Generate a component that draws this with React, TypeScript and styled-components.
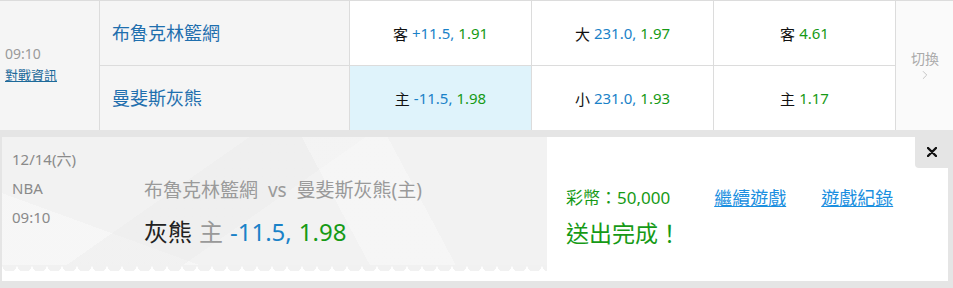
import styled, { createGlobalStyle } from "styled-components"
import { ChevronRight } from "lucide-react"

const GlobalStyle = createGlobalStyle`
  body {
    margin: 0;
    background: #ffffff;
    font-family: "Noto Sans", "Noto Sans CJK TC", sans-serif;
  }
`

const BLUE = "#1a82c8"
const GREEN = "#169a16"

type Odd = { side: string; line?: string; price: string; picked?: boolean }

const rows: { team: string; odds: Odd[] }[] = [
    {
        team: "布魯克林籃網",
        odds: [
            { side: "客", line: "+11.5,", price: "1.91" },
            { side: "大", line: "231.0,", price: "1.97" },
            { side: "客", price: "4.61" },
        ],
    },
    {
        team: "曼斐斯灰熊",
        odds: [
            { side: "主", line: "-11.5,", price: "1.98", picked: true },
            { side: "小", line: "231.0,", price: "1.93" },
            { side: "主", price: "1.17" },
        ],
    },
]

export default function App() {
    return (
        <>
            <GlobalStyle />
            <Board>
                <TimeCell>
                    <Clock>09:10</Clock>
                    <InfoLink href="#">對戰資訊</InfoLink>
                </TimeCell>
                {rows.map((r, i) => (
                    <Row key={r.team} $row={i + 1}>
                        <TeamCell>{r.team}</TeamCell>
                        {r.odds.map((o, j) => (
                            <OddCell key={j} $picked={o.picked}>
                                <Side>{o.side}</Side>
                                {o.line && <Line>{o.line}</Line>}
                                <Price>{o.price}</Price>
                            </OddCell>
                        ))}
                    </Row>
                ))}
                <SwitchCell>
                    <span>切換</span>
                    <ChevronRight size={14} strokeWidth={1.5} color="#bdbdbd" />
                </SwitchCell>
            </Board>

            <SlipArea>
                <Slip>
                    <Ticket>
                        <Meta>
                            <span>12/14(六)</span>
                            <span>NBA</span>
                            <span>09:10</span>
                        </Meta>
                        <Bet>
                            <Matchup>布魯克林籃網&nbsp; vs &nbsp;曼斐斯灰熊(主)</Matchup>
                            <Pick>
                                <PickTeam>灰熊</PickTeam>
                                <PickSide>主</PickSide>
                                <Line>-11.5,</Line>
                                <Price>1.98</Price>
                            </Pick>
                        </Bet>
                    </Ticket>
                    <Result>
                        <ResultTop>
                            <Coins>彩幣：50,000</Coins>
                            <ActionLink href="#">繼續遊戲</ActionLink>
                            <ActionLink href="#">遊戲紀錄</ActionLink>
                        </ResultTop>
                        <Done>送出完成！</Done>
                    </Result>
                    <CloseButton aria-label="close">
                        <svg width="10" height="10" viewBox="0 0 10 10">
                            <path d="M1 1 L9 9 M9 1 L1 9" stroke="#111" strokeWidth="2.4" strokeLinecap="round" />
                        </svg>
                    </CloseButton>
                </Slip>
            </SlipArea>
        </>
    )
}

const Board = styled.div`
    display: grid;
    grid-template-columns: 100px 250px 182px 182px 182px 1fr;
    grid-template-rows: 65px 64px;
    border-top: 1px solid #dcdcdc;
    background: #f5f5f5;
`
const TimeCell = styled.div`
    grid-row: 1 / 3;
    grid-column: 1;
    border-right: 1px solid #dcdcdc;
    display: flex;
    flex-direction: column;
    justify-content: center;
    padding: 0 0 4px 5px;
`
const Clock = styled.span`
    color: #9a9a9a;
    font-size: 14px;
    line-height: 22px;
`
const InfoLink = styled.a`
    color: #1d6a9a;
    font-size: 13px;
    line-height: 20px;
    text-decoration: underline;
`
const Row = styled.div<{ $row: number }>`
    display: contents;
    & > * {
        grid-row: ${p => p.$row};
        border-bottom: ${p => (p.$row === 1 ? "1px solid #dcdcdc" : "none")};
    }
`
const TeamCell = styled.div`
    display: flex;
    align-items: center;
    padding-left: 12px;
    padding-bottom: 2px;
    border-right: 1px solid #dcdcdc;
    color: #1f6fae;
    font-size: 18px;
`
const OddCell = styled.div<{ $picked?: boolean }>`
    display: flex;
    align-items: center;
    justify-content: center;
    gap: 4px;
    border-right: 1px solid #dcdcdc;
    background: ${p => (p.$picked ? "#dff3fb" : "#ffffff")};
    font-size: 15px;
`
const Side = styled.span`
    color: #111;
`
const Line = styled.span`
    color: ${BLUE};
`
const Price = styled.span`
    color: ${GREEN};
`
const SwitchCell = styled.div`
    grid-row: 1 / 3;
    grid-column: 6;
    background: #fafafa;
    display: flex;
    flex-direction: column;
    align-items: center;
    justify-content: center;
    color: #aaaaaa;
    font-size: 14px;
    line-height: 18px;
    padding-left: 1px;
`

const SlipArea = styled.div`
    background: #e5e5e5;
    padding: 7px 5px 7px 2px;
`
const Slip = styled.div`
    position: relative;
    display: flex;
    height: 144px;
    background: #ffffff;
`
const Ticket = styled.div`
    position: relative;
    width: 545px;
    height: 128px;
    display: flex;
    background-color: #f2f2f2;
    background-image:
        linear-gradient(62deg, transparent 0 60%, rgba(255, 255, 255, 0.3) 60% 74%, transparent 74%),
        linear-gradient(145deg, transparent 0 34%, rgba(236, 236, 236, 0.5) 34% 50%, transparent 50%),
        linear-gradient(20deg, rgba(255, 255, 255, 0.35) 0 22%, transparent 22%);
    &::after {
        content: "";
        position: absolute;
        left: 0;
        right: 0;
        top: 100%;
        height: 6px;
        background: radial-gradient(circle at 7.5px 0, #f1f1f1 7px, transparent 7.5px) repeat-x;
        background-size: 15px 6px;
    }
`
const Meta = styled.div`
    width: 142px;
    padding: 8px 0 0 10px;
    box-sizing: border-box;
    display: flex;
    flex-direction: column;
    color: #8a8a8a;
    font-size: 15px;
    line-height: 29px;
`
const Bet = styled.div`
    display: flex;
    flex-direction: column;
    padding-top: 40px;
`
const Matchup = styled.span`
    color: #9a9a9a;
    font-size: 19px;
    line-height: 26px;
`
const Pick = styled.div`
    display: flex;
    gap: 7px;
    margin-top: 13px;
    font-size: 24px;
    line-height: 32px;
`
const PickTeam = styled.span`
    color: #222;
`
const PickSide = styled.span`
    color: #999;
`
const Result = styled.div`
    flex: 1;
    padding: 47px 0 0 19px;
    display: flex;
    flex-direction: column;
`
const ResultTop = styled.div`
    display: flex;
    align-items: center;
    line-height: 28px;
`
const Coins = styled.span`
    color: ${GREEN};
    font-size: 17px;
    margin-right: 44px;
`
const ActionLink = styled.a`
    color: #1a8fe0;
    font-size: 18px;
    text-decoration: underline;
    margin-right: 35px;
`
const Done = styled.span`
    color: ${GREEN};
    font-size: 23px;
    line-height: 34px;
    margin-top: 4px;
`
const CloseButton = styled.button`
    position: absolute;
    top: 0;
    right: 0;
    width: 33px;
    height: 31px;
    border: 0;
    padding: 0 0 2px 0;
    background: #e5e5e5;
    border-bottom-left-radius: 4px;
    display: flex;
    align-items: center;
    justify-content: center;
    cursor: pointer;
`
